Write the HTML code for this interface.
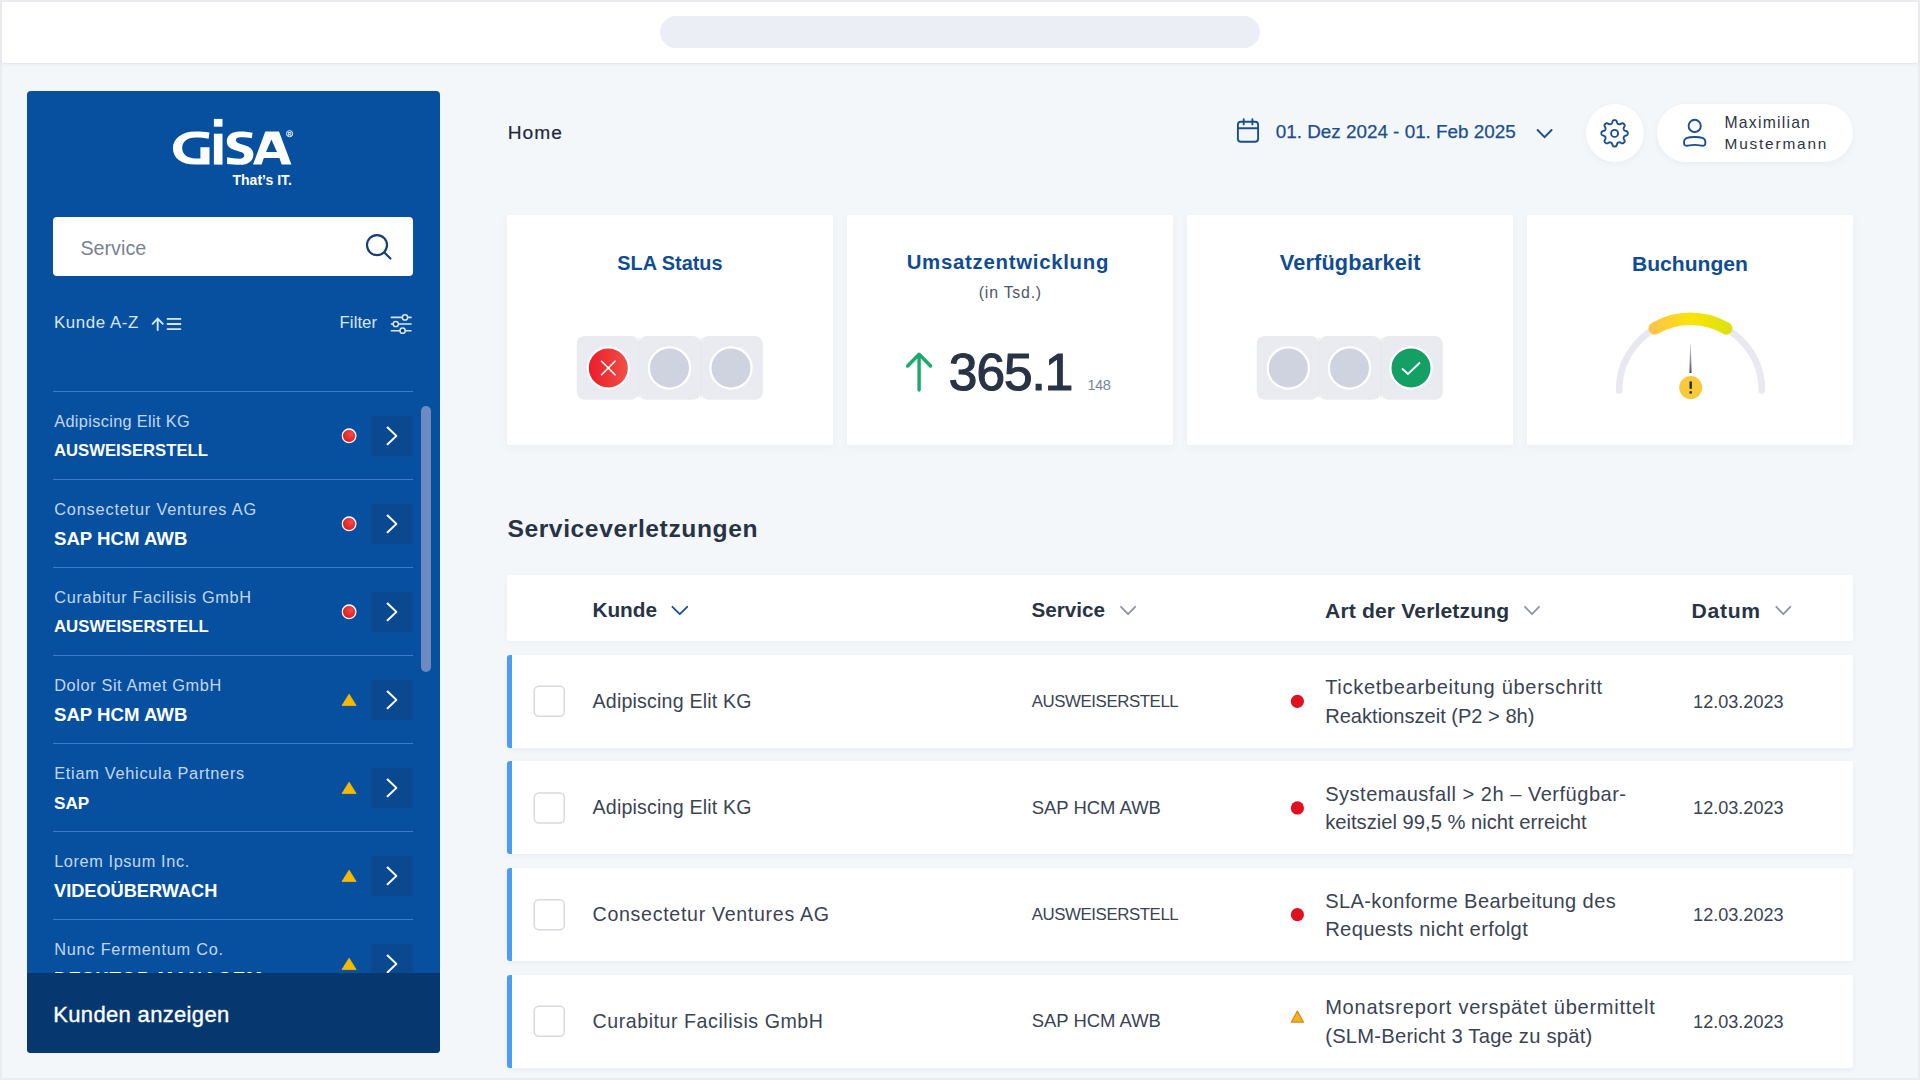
<!DOCTYPE html>
<html><head><meta charset="utf-8"><title>GISA Dashboard</title>
<style>
html,body{margin:0;padding:0;width:1920px;height:1080px;overflow:hidden;background:#F3F6FA;}
body{position:relative;font-family:"Liberation Sans",sans-serif;}
.t{position:absolute;white-space:nowrap;line-height:1;}
.r{position:absolute;box-sizing:border-box;}
.s{position:absolute;left:0;top:0;overflow:visible;pointer-events:none;}
</style></head><body>
<div class="r" style="left:0.00px;top:0.00px;width:1920.00px;height:1080.00px;background:#EBEBF2;border-radius:0px;"></div>
<div class="r" style="left:2.00px;top:2.00px;width:1916.00px;height:1076.00px;background:#F4F7FA;border-radius:0px;"></div>
<div class="r" style="left:2.00px;top:2.00px;width:1916.00px;height:62.00px;background:#FFFFFF;border-radius:0px;border-bottom:1px solid #E4E8EF;box-shadow:0 1px 3px rgba(40,60,100,0.05);"></div>
<div class="r" style="left:660.00px;top:16.00px;width:600.00px;height:32.00px;background:#EBEEF5;border-radius:16px;"></div>
<div class="r" style="left:26.67px;top:90.67px;width:413.33px;height:962.66px;background:#07509F;border-radius:4px;"></div>
<div class="r" style="left:53.00px;top:217.00px;width:360.30px;height:59.00px;background:#FFFFFF;border-radius:4px;"></div>
<div class="t" style="left:80.40px;top:238.89px;font-size:19.75px;letter-spacing:0.000px;color:#7A7F93;font-weight:400;">Service</div>
<div class="t" style="left:232.50px;top:173.12px;font-size:14.03px;letter-spacing:0.000px;color:#FFFFFF;font-weight:700;">That’s IT.</div>
<svg class="s" width="1920" height="1080" viewBox="0 0 1920 1080"><g fill="#FFFFFF"><path d="M209.5,132.6 C205,131.6 200,131.4 195.5,131.4 C181,131.4 172.9,139 172.9,148 C172.9,158 181,164.6 195.5,164.6 L209.5,164.6 L209.5,147.2 L200.4,147.2 L200.4,158.4 L195.5,158.4 C187,158.4 182.2,154 182.2,148 C182.2,141.8 187,137.6 195.5,137.6 C200,137.6 205,138.1 208.6,138.8 Z"/><rect x="213.9" y="118.9" width="8.6" height="7.8"/><rect x="213.9" y="133.7" width="8.6" height="30.9"/><path fill-rule="evenodd" d="M253,164.6 L265.3,131.5 L279,131.5 L291.4,164.6 L281.7,164.6 L279.4,158 L263.8,158 L261.6,164.6 Z M266,152 L277,152 L271.4,139.4 Z"/></g><path fill="#FFFFFF" d="M252.6,132.8 C248,131.8 244,131.4 239.9,131.4 C231.5,131.4 226.8,135.6 226.8,141.2 C226.8,147.4 232,149.4 238.5,151.2 C242.6,152.3 244.3,153.2 244.3,155.3 C244.3,157.6 242.3,158.7 239.4,158.7 C235.2,158.7 230.8,157.8 227.1,157.2 L227.1,164.1 C231,164.6 235.5,164.8 239.4,164.8 C248.6,164.8 253.4,160.6 253.4,154.4 C253.4,148.4 248.8,146.2 242.2,144.4 C237.6,143.1 235.9,142.2 235.9,140.2 C235.9,138.2 237.8,137.3 240.4,137.3 C244.4,137.3 248.4,137.7 251.7,138.3 Z"/><circle cx="289.6" cy="133.7" r="3.1" fill="none" stroke="#FFFFFF" stroke-width="0.9"/><text x="289.6" y="135.6" font-size="5" font-weight="700" text-anchor="middle" fill="#FFFFFF" font-family="Liberation Sans">R</text><circle cx="377" cy="245.1" r="10" fill="none" stroke="#163F73" stroke-width="2.2"/><line x1="384.4" y1="252.5" x2="390.4" y2="258.5" stroke="#163F73" stroke-width="2.2" stroke-linecap="round"/><g stroke="#D9E7FA" stroke-width="1.9" stroke-linecap="round" fill="none"><path d="M157.7,330 L157.7,319 M152.6,323.8 L157.7,318.6 L162.8,323.8"/><path d="M167.6,318.9 H180.4 M167.6,324 H180.4 M167.6,329.1 H180.4"/></g><g stroke="#D9E7FA" stroke-width="1.6" stroke-linecap="round" fill="none"><path d="M391.4,317.4 H411 M391.4,324 H411 M391.4,330.7 H411"/></g><g stroke="#D9E7FA" stroke-width="1.5" fill="#0B3E78"><circle cx="405" cy="317.4" r="2.6"/><circle cx="395.8" cy="324" r="2.6"/><circle cx="402.6" cy="330.7" r="2.6"/></g></svg>
<div class="t" style="left:54.00px;top:314.98px;font-size:16.92px;letter-spacing:0.558px;color:#D9E7FA;font-weight:400;">Kunde A-Z</div>
<div class="t" style="left:339.60px;top:315.01px;font-size:16.77px;letter-spacing:0.035px;color:#D9E7FA;font-weight:400;">Filter</div>
<div class="r" style="left:53.30px;top:390.75px;width:360.10px;height:1.00px;background:#3E7CCB;border-radius:0px;"></div>
<div class="r" style="left:371.30px;top:415.60px;width:41.50px;height:40.80px;background:#0A4890;border-radius:1px;"></div>
<div class="t" style="left:54.20px;top:413.09px;font-size:16.32px;letter-spacing:0.345px;color:#C3D7F4;font-weight:400;">Adipiscing Elit KG</div>
<div class="t" style="left:54.00px;top:443.47px;font-size:16.69px;letter-spacing:0.000px;color:#FFFFFF;font-weight:700;">AUSWEISERSTELL</div>
<div class="r" style="left:53.30px;top:478.75px;width:360.10px;height:1.00px;background:#3E7CCB;border-radius:0px;"></div>
<div class="r" style="left:371.30px;top:503.60px;width:41.50px;height:40.80px;background:#0A4890;border-radius:1px;"></div>
<div class="t" style="left:54.20px;top:501.09px;font-size:16.32px;letter-spacing:0.814px;color:#C3D7F4;font-weight:400;">Consectetur Ventures AG</div>
<div class="t" style="left:54.00px;top:529.83px;font-size:18.63px;letter-spacing:0.000px;color:#FFFFFF;font-weight:700;">SAP HCM AWB</div>
<div class="r" style="left:53.30px;top:566.75px;width:360.10px;height:1.00px;background:#3E7CCB;border-radius:0px;"></div>
<div class="r" style="left:371.30px;top:591.60px;width:41.50px;height:40.80px;background:#0A4890;border-radius:1px;"></div>
<div class="t" style="left:54.20px;top:589.09px;font-size:16.32px;letter-spacing:0.681px;color:#C3D7F4;font-weight:400;">Curabitur Facilisis GmbH</div>
<div class="t" style="left:54.00px;top:619.40px;font-size:16.78px;letter-spacing:0.000px;color:#FFFFFF;font-weight:700;">AUSWEISERSTELL</div>
<div class="r" style="left:53.30px;top:654.75px;width:360.10px;height:1.00px;background:#3E7CCB;border-radius:0px;"></div>
<div class="r" style="left:371.30px;top:679.60px;width:41.50px;height:40.80px;background:#0A4890;border-radius:1px;"></div>
<div class="t" style="left:54.20px;top:677.09px;font-size:16.32px;letter-spacing:0.614px;color:#C3D7F4;font-weight:400;">Dolor Sit Amet GmbH</div>
<div class="t" style="left:54.00px;top:705.83px;font-size:18.63px;letter-spacing:0.000px;color:#FFFFFF;font-weight:700;">SAP HCM AWB</div>
<div class="r" style="left:53.30px;top:742.75px;width:360.10px;height:1.00px;background:#3E7CCB;border-radius:0px;"></div>
<div class="r" style="left:371.30px;top:767.60px;width:41.50px;height:40.80px;background:#0A4890;border-radius:1px;"></div>
<div class="t" style="left:54.20px;top:765.09px;font-size:16.32px;letter-spacing:0.724px;color:#C3D7F4;font-weight:400;">Etiam Vehicula Partners</div>
<div class="t" style="left:54.00px;top:795.08px;font-size:17.15px;letter-spacing:-0.000px;color:#FFFFFF;font-weight:700;">SAP</div>
<div class="r" style="left:53.30px;top:830.75px;width:360.10px;height:1.00px;background:#3E7CCB;border-radius:0px;"></div>
<div class="r" style="left:371.30px;top:855.60px;width:41.50px;height:40.80px;background:#0A4890;border-radius:1px;"></div>
<div class="t" style="left:54.20px;top:853.09px;font-size:16.32px;letter-spacing:0.599px;color:#C3D7F4;font-weight:400;">Lorem Ipsum Inc.</div>
<div class="t" style="left:54.00px;top:882.20px;font-size:18.20px;letter-spacing:0.000px;color:#FFFFFF;font-weight:700;">VIDEOÜBERWACH</div>
<div class="r" style="left:53.30px;top:918.75px;width:360.10px;height:1.00px;background:#3E7CCB;border-radius:0px;"></div>
<div class="r" style="left:371.30px;top:943.60px;width:41.50px;height:40.80px;background:#0A4890;border-radius:1px;"></div>
<div class="t" style="left:54.20px;top:941.09px;font-size:16.32px;letter-spacing:0.767px;color:#C3D7F4;font-weight:400;">Nunc Fermentum Co.</div>
<div class="t" style="left:54.00px;top:969.76px;font-size:18.71px;letter-spacing:0.922px;color:#FFFFFF;font-weight:700;">DESKTOP-MANAGEM</div>
<svg class="s" width="1920" height="1080" viewBox="0 0 1920 1080"><defs><radialGradient id="rg" cx="0.65" cy="0.35" r="0.7"><stop offset="0" stop-color="#F24B4B"/><stop offset="1" stop-color="#DC1A1F"/></radialGradient></defs><path d="M387.6,427.45 L396.4,435.85 L387.6,444.25" fill="none" stroke="#FFFFFF" stroke-width="2" stroke-linecap="round" stroke-linejoin="round"/><circle cx="349.1" cy="435.80" r="6.8" fill="url(#rg)" stroke="#FFFFFF" stroke-width="1.3"/><path d="M387.6,515.45 L396.4,523.85 L387.6,532.25" fill="none" stroke="#FFFFFF" stroke-width="2" stroke-linecap="round" stroke-linejoin="round"/><circle cx="349.1" cy="523.80" r="6.8" fill="url(#rg)" stroke="#FFFFFF" stroke-width="1.3"/><path d="M387.6,603.45 L396.4,611.85 L387.6,620.25" fill="none" stroke="#FFFFFF" stroke-width="2" stroke-linecap="round" stroke-linejoin="round"/><circle cx="349.1" cy="611.80" r="6.8" fill="url(#rg)" stroke="#FFFFFF" stroke-width="1.3"/><path d="M387.6,691.45 L396.4,699.85 L387.6,708.25" fill="none" stroke="#FFFFFF" stroke-width="2" stroke-linecap="round" stroke-linejoin="round"/><path d="M349.1,694.15 L356.2,705.55 L342,705.55 Z" fill="#F6B900" stroke="#F6B900" stroke-width="0.8" stroke-linejoin="round"/><path d="M387.6,779.45 L396.4,787.85 L387.6,796.25" fill="none" stroke="#FFFFFF" stroke-width="2" stroke-linecap="round" stroke-linejoin="round"/><path d="M349.1,782.15 L356.2,793.55 L342,793.55 Z" fill="#F6B900" stroke="#F6B900" stroke-width="0.8" stroke-linejoin="round"/><path d="M387.6,867.45 L396.4,875.85 L387.6,884.25" fill="none" stroke="#FFFFFF" stroke-width="2" stroke-linecap="round" stroke-linejoin="round"/><path d="M349.1,870.15 L356.2,881.55 L342,881.55 Z" fill="#F6B900" stroke="#F6B900" stroke-width="0.8" stroke-linejoin="round"/><path d="M387.6,955.45 L396.4,963.85 L387.6,972.25" fill="none" stroke="#FFFFFF" stroke-width="2" stroke-linecap="round" stroke-linejoin="round"/><path d="M349.1,958.15 L356.2,969.55 L342,969.55 Z" fill="#F6B900" stroke="#F6B900" stroke-width="0.8" stroke-linejoin="round"/></svg>
<div class="r" style="left:420.90px;top:405.50px;width:9.80px;height:266.50px;background:#6D8BC0;border-radius:5px;"></div>
<div class="r" style="left:26.67px;top:973.33px;width:413.33px;height:80.00px;background:#06386F;border-radius:0 0 4px 4px;"></div>
<div class="t" style="left:53.30px;top:1004.37px;font-size:22.01px;letter-spacing:0.330px;color:#FFFFFF;font-weight:400;-webkit-text-stroke:0.35px #fff;">Kunden anzeigen</div>
<div class="t" style="left:507.80px;top:122.98px;font-size:19.16px;letter-spacing:0.978px;color:#1E293B;font-weight:400;-webkit-text-stroke:0.2px #1E293B;">Home</div>
<svg class="s" width="1920" height="1080" viewBox="0 0 1920 1080"><g fill="none" stroke="#1A4E8E" stroke-width="1.9" stroke-linecap="round"><rect x="1237.9" y="121.8" width="20.2" height="20" rx="3"/><path d="M1238,128.3 H1258 M1243.7,119.2 V124.4 M1252.4,119.2 V124.4"/><path d="M1537.6,130 L1544.6,137.2 L1551.6,130"/></g></svg>
<div class="t" style="left:1275.70px;top:123.21px;font-size:18.88px;letter-spacing:0.000px;color:#1A4E8E;font-weight:400;-webkit-text-stroke:0.25px #1A4E8E;">01. Dez 2024 - 01. Feb 2025</div>
<div class="r" style="left:1585.60px;top:104.00px;width:58.10px;height:58.20px;background:#FFFFFF;border-radius:29px;box-shadow:0 2px 6px rgba(30,50,90,0.06);"></div>
<div class="r" style="left:1657.30px;top:104.00px;width:195.70px;height:58.20px;background:#FFFFFF;border-radius:29px;box-shadow:0 2px 6px rgba(30,50,90,0.06);"></div>
<svg class="s" width="1920" height="1080" viewBox="0 0 1920 1080"><polygon points="1614.60,120.10 1614.95,120.11 1615.29,120.16 1615.63,120.25 1615.96,120.40 1616.26,120.66 1616.54,121.06 1616.77,121.61 1616.95,122.23 1617.12,122.79 1617.30,123.21 1617.51,123.49 1617.72,123.69 1617.95,123.83 1618.19,123.96 1618.43,124.06 1618.67,124.16 1618.92,124.24 1619.19,124.29 1619.48,124.31 1619.82,124.25 1620.25,124.09 1620.76,123.81 1621.33,123.50 1621.89,123.27 1622.36,123.18 1622.76,123.22 1623.10,123.34 1623.41,123.52 1623.68,123.73 1623.93,123.97 1624.17,124.22 1624.38,124.49 1624.56,124.80 1624.68,125.14 1624.72,125.54 1624.63,126.01 1624.40,126.57 1624.09,127.14 1623.81,127.65 1623.65,128.08 1623.59,128.42 1623.61,128.71 1623.66,128.98 1623.74,129.23 1623.84,129.47 1623.94,129.71 1624.07,129.95 1624.21,130.18 1624.41,130.39 1624.69,130.60 1625.11,130.78 1625.67,130.95 1626.29,131.13 1626.84,131.36 1627.24,131.64 1627.50,131.94 1627.65,132.27 1627.74,132.61 1627.79,132.95 1627.80,133.30 1627.79,133.65 1627.74,133.99 1627.65,134.33 1627.50,134.66 1627.24,134.96 1626.84,135.24 1626.29,135.47 1625.67,135.65 1625.11,135.82 1624.69,136.00 1624.41,136.21 1624.21,136.42 1624.07,136.65 1623.94,136.89 1623.84,137.13 1623.74,137.37 1623.66,137.62 1623.61,137.89 1623.59,138.18 1623.65,138.52 1623.81,138.95 1624.09,139.46 1624.40,140.03 1624.63,140.59 1624.72,141.06 1624.68,141.46 1624.56,141.80 1624.38,142.11 1624.17,142.38 1623.93,142.63 1623.68,142.87 1623.41,143.08 1623.10,143.26 1622.76,143.38 1622.36,143.42 1621.89,143.33 1621.33,143.10 1620.76,142.79 1620.25,142.51 1619.82,142.35 1619.48,142.29 1619.19,142.31 1618.92,142.36 1618.67,142.44 1618.43,142.54 1618.19,142.64 1617.95,142.77 1617.72,142.91 1617.51,143.11 1617.30,143.39 1617.12,143.81 1616.95,144.37 1616.77,144.99 1616.54,145.54 1616.26,145.94 1615.96,146.20 1615.63,146.35 1615.29,146.44 1614.95,146.49 1614.60,146.50 1614.25,146.49 1613.91,146.44 1613.57,146.35 1613.24,146.20 1612.94,145.94 1612.66,145.54 1612.43,144.99 1612.25,144.37 1612.08,143.81 1611.90,143.39 1611.69,143.11 1611.48,142.91 1611.25,142.77 1611.01,142.64 1610.77,142.54 1610.53,142.44 1610.28,142.36 1610.01,142.31 1609.72,142.29 1609.38,142.35 1608.95,142.51 1608.44,142.79 1607.87,143.10 1607.31,143.33 1606.84,143.42 1606.44,143.38 1606.10,143.26 1605.79,143.08 1605.52,142.87 1605.27,142.63 1605.03,142.38 1604.82,142.11 1604.64,141.80 1604.52,141.46 1604.48,141.06 1604.57,140.59 1604.80,140.03 1605.11,139.46 1605.39,138.95 1605.55,138.52 1605.61,138.18 1605.59,137.89 1605.54,137.62 1605.46,137.37 1605.36,137.13 1605.26,136.89 1605.13,136.65 1604.99,136.42 1604.79,136.21 1604.51,136.00 1604.09,135.82 1603.53,135.65 1602.91,135.47 1602.36,135.24 1601.96,134.96 1601.70,134.66 1601.55,134.33 1601.46,133.99 1601.41,133.65 1601.40,133.30 1601.41,132.95 1601.46,132.61 1601.55,132.27 1601.70,131.94 1601.96,131.64 1602.36,131.36 1602.91,131.13 1603.53,130.95 1604.09,130.78 1604.51,130.60 1604.79,130.39 1604.99,130.18 1605.13,129.95 1605.26,129.71 1605.36,129.47 1605.46,129.23 1605.54,128.98 1605.59,128.71 1605.61,128.42 1605.55,128.08 1605.39,127.65 1605.11,127.14 1604.80,126.57 1604.57,126.01 1604.48,125.54 1604.52,125.14 1604.64,124.80 1604.82,124.49 1605.03,124.22 1605.27,123.97 1605.52,123.73 1605.79,123.52 1606.10,123.34 1606.44,123.22 1606.84,123.18 1607.31,123.27 1607.87,123.50 1608.44,123.81 1608.95,124.09 1609.38,124.25 1609.72,124.31 1610.01,124.29 1610.28,124.24 1610.53,124.16 1610.77,124.06 1611.01,123.96 1611.25,123.83 1611.48,123.69 1611.69,123.49 1611.90,123.21 1612.08,122.79 1612.25,122.23 1612.43,121.61 1612.66,121.06 1612.94,120.66 1613.24,120.40 1613.57,120.25 1613.91,120.16 1614.25,120.11 1614.60,120.10" fill="none" stroke="#1A4E8E" stroke-width="1.9" stroke-linejoin="round"/><circle cx="1614.6" cy="133.4" r="3.5" fill="none" stroke="#1A4E8E" stroke-width="1.9"/><circle cx="1694.7" cy="125.9" r="6.1" fill="none" stroke="#1A4E8E" stroke-width="1.9"/><path d="M1684.1,141.2 C1684.1,138.6 1688,137 1694.7,137 C1701.4,137 1705.3,138.6 1705.3,141.2 L1705.3,143.6 C1705.3,145.6 1703.6,146 1701.4,145.6 C1698.6,145.1 1696.5,144.9 1694.7,144.9 C1692.9,144.9 1690.8,145.1 1688,145.6 C1685.8,146 1684.1,145.6 1684.1,143.6 Z" fill="none" stroke="#1A4E8E" stroke-width="1.9"/></svg>
<div class="t" style="left:1724.50px;top:114.59px;font-size:15.72px;letter-spacing:1.236px;color:#2D3443;font-weight:400;">Maximilian</div>
<div class="t" style="left:1724.50px;top:136.05px;font-size:15.42px;letter-spacing:1.807px;color:#2D3443;font-weight:400;">Mustermann</div>
<div class="r" style="left:506.67px;top:215.00px;width:326.67px;height:230.00px;background:#FFFFFF;border-radius:2px;box-shadow:0 3px 8px rgba(40,60,100,0.05);"></div>
<div class="r" style="left:846.67px;top:215.00px;width:326.67px;height:230.00px;background:#FFFFFF;border-radius:2px;box-shadow:0 3px 8px rgba(40,60,100,0.05);"></div>
<div class="r" style="left:1186.67px;top:215.00px;width:326.67px;height:230.00px;background:#FFFFFF;border-radius:2px;box-shadow:0 3px 8px rgba(40,60,100,0.05);"></div>
<div class="r" style="left:1526.67px;top:215.00px;width:326.67px;height:230.00px;background:#FFFFFF;border-radius:2px;box-shadow:0 3px 8px rgba(40,60,100,0.05);"></div>
<div class="t" style="left:617.30px;top:253.68px;font-size:19.87px;letter-spacing:-0.000px;color:#0F4C94;font-weight:700;">SLA Status</div>
<div class="t" style="left:906.70px;top:251.96px;font-size:20.36px;letter-spacing:0.727px;color:#0F4C94;font-weight:700;">Umsatzentwicklung</div>
<div class="t" style="left:1279.80px;top:252.32px;font-size:21.71px;letter-spacing:0.157px;color:#0F4C94;font-weight:700;">Verfügbarkeit</div>
<div class="t" style="left:1632.00px;top:252.86px;font-size:21.07px;letter-spacing:0.000px;color:#0F4C94;font-weight:700;">Buchungen</div>
<div class="t" style="left:978.80px;top:284.77px;font-size:15.87px;letter-spacing:0.778px;color:#4F5767;font-weight:400;">(in Tsd.)</div>
<div class="t" style="left:948.80px;top:346.98px;font-size:51.41px;letter-spacing:-0.995px;color:#283346;font-weight:400;-webkit-text-stroke:1.2px #283346;">365.1</div>
<div class="t" style="left:1087.40px;top:378.21px;font-size:14.52px;letter-spacing:-0.424px;color:#7B8396;font-weight:400;">148</div>
<svg class="s" width="1920" height="1080" viewBox="0 0 1920 1080"><defs><linearGradient id="red" x1="0" y1="0" x2="1" y2="0"><stop offset="0" stop-color="#EC1A27"/><stop offset="1" stop-color="#EF5249"/></linearGradient><linearGradient id="yel" x1="0" y1="0" x2="1" y2="0"><stop offset="0" stop-color="#FDC545"/><stop offset="0.5" stop-color="#FCE30A"/><stop offset="1" stop-color="#DDE20E"/></linearGradient><linearGradient id="ndl" x1="0" y1="0" x2="0" y2="1"><stop offset="0" stop-color="#D5D8E6"/><stop offset="1" stop-color="#4A4F73"/></linearGradient></defs><rect x="576.80" y="336" width="62" height="63.8" rx="8" fill="#E9EBF1"/><rect x="638.80" y="336" width="62" height="63.8" rx="8" fill="#E9EBF1"/><rect x="700.80" y="336" width="62" height="63.8" rx="8" fill="#E9EBF1"/><rect x="638.20" y="338" width="1.2" height="59.8" fill="#E3E6EC"/><rect x="700.20" y="338" width="1.2" height="59.8" fill="#E3E6EC"/><circle cx="608.30" cy="368" r="20.6" fill="url(#red)" stroke="#FFFFFF" stroke-width="2.2"/><path d="M601.10,360.8 L615.50,375.2 M615.50,360.8 L601.10,375.2" stroke="#FFFFFF" stroke-width="1.6"/><circle cx="669.50" cy="368" r="20.6" fill="#CFD2DF" stroke="#FFFFFF" stroke-width="2.2"/><circle cx="731.00" cy="368" r="20.6" fill="#CFD2DF" stroke="#FFFFFF" stroke-width="2.2"/><rect x="1256.80" y="336" width="62" height="63.8" rx="8" fill="#E9EBF1"/><rect x="1318.80" y="336" width="62" height="63.8" rx="8" fill="#E9EBF1"/><rect x="1380.80" y="336" width="62" height="63.8" rx="8" fill="#E9EBF1"/><rect x="1318.20" y="338" width="1.2" height="59.8" fill="#E3E6EC"/><rect x="1380.20" y="338" width="1.2" height="59.8" fill="#E3E6EC"/><circle cx="1288.30" cy="368" r="20.6" fill="#CFD2DF" stroke="#FFFFFF" stroke-width="2.2"/><circle cx="1349.50" cy="368" r="20.6" fill="#CFD2DF" stroke="#FFFFFF" stroke-width="2.2"/><circle cx="1411.00" cy="368" r="20.6" fill="#14A064" stroke="#FFFFFF" stroke-width="2.2"/><path d="M1402.00,368.5 L1408.00,374 L1420.00,362.5" fill="none" stroke="#FFFFFF" stroke-width="1.8"/><path d="M919.1,390 V354.5 M907.6,366 L919.1,354.2 L930.6,366" fill="none" stroke="#1BAA6C" stroke-width="3.4" stroke-linecap="round" stroke-linejoin="round"/><path d="M1619.10,390.57 A71.4,71.4 0 0 1 1761.90,390.57" fill="none" stroke="#E7E8F0" stroke-width="6.6" stroke-linecap="round"/><path d="M1654.80,328.37 A71.4,71.4 0 0 1 1726.20,328.37" fill="none" stroke="url(#yel)" stroke-width="12.6" stroke-linecap="round"/><path d="M1690.1,344.5 L1690.9,344.5 L1691.6,373 L1689.4,373 Z" fill="url(#ndl)"/><circle cx="1690.7" cy="387.6" r="11.5" fill="#F8C93A"/><rect x="1689.5" y="381.3" width="2.4" height="7.6" rx="1" fill="#2A2A3A"/><circle cx="1690.7" cy="392.4" r="1.3" fill="#2A2A3A"/></svg>
<div class="t" style="left:507.40px;top:517.40px;font-size:24.63px;letter-spacing:0.589px;color:#283346;font-weight:700;">Serviceverletzungen</div>
<div class="r" style="left:506.67px;top:574.70px;width:1346.66px;height:66.50px;background:#FFFFFF;border-radius:3px;box-shadow:0 2px 6px rgba(40,60,100,0.04);"></div>
<div class="t" style="left:592.40px;top:599.79px;font-size:20.80px;letter-spacing:-0.000px;color:#283346;font-weight:700;">Kunde</div>
<div class="t" style="left:1031.50px;top:599.88px;font-size:20.70px;letter-spacing:0.000px;color:#283346;font-weight:700;">Service</div>
<div class="t" style="left:1325.10px;top:599.53px;font-size:21.11px;letter-spacing:0.132px;color:#283346;font-weight:700;">Art der Verletzung</div>
<div class="t" style="left:1691.50px;top:599.53px;font-size:21.11px;letter-spacing:0.713px;color:#283346;font-weight:700;">Datum</div>
<div class="r" style="left:506.67px;top:654.50px;width:1346.66px;height:93.30px;background:#FFFFFF;border-radius:4px 3px 3px 4px;box-shadow:0 2px 5px rgba(40,60,100,0.05);"></div>
<div class="r" style="left:506.67px;top:654.50px;width:5.33px;height:93.30px;background:#4A9CF4;border-radius:3px 0 0 3px;"></div>
<div class="t" style="left:592.60px;top:691.80px;font-size:19.61px;letter-spacing:0.181px;color:#3A4354;font-weight:400;">Adipiscing Elit KG</div>
<div class="t" style="left:1031.70px;top:693.72px;font-size:16.87px;letter-spacing:-0.437px;color:#3A4354;font-weight:400;">AUSWEISERSTELL</div>
<div class="t" style="left:1693.10px;top:692.59px;font-size:18.08px;letter-spacing:0.000px;color:#3A4354;font-weight:400;">12.03.2023</div>
<div class="t" style="left:1325.20px;top:677.42px;font-size:20.06px;letter-spacing:0.683px;color:#3A4354;font-weight:400;">Ticketbearbeitung überschritt</div>
<div class="t" style="left:1325.20px;top:705.80px;font-size:20.09px;letter-spacing:-0.000px;color:#3A4354;font-weight:400;">Reaktionszeit (P2 > 8h)</div>
<div class="r" style="left:506.67px;top:761.17px;width:1346.66px;height:93.30px;background:#FFFFFF;border-radius:4px 3px 3px 4px;box-shadow:0 2px 5px rgba(40,60,100,0.05);"></div>
<div class="r" style="left:506.67px;top:761.17px;width:5.33px;height:93.30px;background:#4A9CF4;border-radius:3px 0 0 3px;"></div>
<div class="t" style="left:592.60px;top:798.47px;font-size:19.61px;letter-spacing:0.181px;color:#3A4354;font-weight:400;">Adipiscing Elit KG</div>
<div class="t" style="left:1031.70px;top:799.03px;font-size:18.47px;letter-spacing:0.000px;color:#3A4354;font-weight:400;">SAP HCM AWB</div>
<div class="t" style="left:1693.10px;top:799.26px;font-size:18.08px;letter-spacing:0.000px;color:#3A4354;font-weight:400;">12.03.2023</div>
<div class="t" style="left:1325.20px;top:784.09px;font-size:20.06px;letter-spacing:0.501px;color:#3A4354;font-weight:400;">Systemausfall > 2h – Verfügbar-</div>
<div class="t" style="left:1325.20px;top:812.38px;font-size:20.19px;letter-spacing:-0.000px;color:#3A4354;font-weight:400;">keitsziel 99,5 % nicht erreicht</div>
<div class="r" style="left:506.67px;top:867.84px;width:1346.66px;height:93.30px;background:#FFFFFF;border-radius:4px 3px 3px 4px;box-shadow:0 2px 5px rgba(40,60,100,0.05);"></div>
<div class="r" style="left:506.67px;top:867.84px;width:5.33px;height:93.30px;background:#4A9CF4;border-radius:3px 0 0 3px;"></div>
<div class="t" style="left:592.60px;top:905.14px;font-size:19.61px;letter-spacing:0.685px;color:#3A4354;font-weight:400;">Consectetur Ventures AG</div>
<div class="t" style="left:1031.70px;top:907.06px;font-size:16.87px;letter-spacing:-0.437px;color:#3A4354;font-weight:400;">AUSWEISERSTELL</div>
<div class="t" style="left:1693.10px;top:905.93px;font-size:18.08px;letter-spacing:0.000px;color:#3A4354;font-weight:400;">12.03.2023</div>
<div class="t" style="left:1325.20px;top:890.76px;font-size:20.06px;letter-spacing:0.402px;color:#3A4354;font-weight:400;">SLA-konforme Bearbeitung des</div>
<div class="t" style="left:1325.20px;top:919.03px;font-size:20.21px;letter-spacing:0.351px;color:#3A4354;font-weight:400;">Requests nicht erfolgt</div>
<div class="r" style="left:506.67px;top:974.51px;width:1346.66px;height:93.30px;background:#FFFFFF;border-radius:4px 3px 3px 4px;box-shadow:0 2px 5px rgba(40,60,100,0.05);"></div>
<div class="r" style="left:506.67px;top:974.51px;width:5.33px;height:93.30px;background:#4A9CF4;border-radius:3px 0 0 3px;"></div>
<div class="t" style="left:592.60px;top:1011.81px;font-size:19.61px;letter-spacing:0.540px;color:#3A4354;font-weight:400;">Curabitur Facilisis GmbH</div>
<div class="t" style="left:1031.70px;top:1012.37px;font-size:18.47px;letter-spacing:0.000px;color:#3A4354;font-weight:400;">SAP HCM AWB</div>
<div class="t" style="left:1693.10px;top:1012.60px;font-size:18.08px;letter-spacing:0.000px;color:#3A4354;font-weight:400;">12.03.2023</div>
<div class="t" style="left:1325.20px;top:997.43px;font-size:20.06px;letter-spacing:0.735px;color:#3A4354;font-weight:400;">Monatsreport verspätet übermittelt</div>
<div class="t" style="left:1325.20px;top:1025.70px;font-size:20.21px;letter-spacing:0.221px;color:#3A4354;font-weight:400;">(SLM-Bericht 3 Tage zu spät)</div>
<svg class="s" width="1920" height="1080" viewBox="0 0 1920 1080"><path d="M672.40,606.8 L679.80,614.2 L687.20,606.8" fill="none" stroke="#1A4E8E" stroke-width="1.8" stroke-linecap="round" stroke-linejoin="round"/><path d="M1121.00,606.8 L1128.10,614.2 L1135.20,606.8" fill="none" stroke="#8E94A8" stroke-width="1.8" stroke-linecap="round" stroke-linejoin="round"/><path d="M1525.00,606.8 L1532.00,614.2 L1539.00,606.8" fill="none" stroke="#8E94A8" stroke-width="1.8" stroke-linecap="round" stroke-linejoin="round"/><path d="M1776.30,606.8 L1783.30,614.2 L1790.30,606.8" fill="none" stroke="#8E94A8" stroke-width="1.8" stroke-linecap="round" stroke-linejoin="round"/><rect x="534.3" y="686.30" width="30" height="30" rx="4.5" fill="#FFFFFF" stroke="#D6D9DF" stroke-width="1.5"/><circle cx="1297.4" cy="701.30" r="6.6" fill="#E0101F"/><rect x="534.3" y="792.97" width="30" height="30" rx="4.5" fill="#FFFFFF" stroke="#D6D9DF" stroke-width="1.5"/><circle cx="1297.4" cy="807.97" r="6.6" fill="#E0101F"/><rect x="534.3" y="899.64" width="30" height="30" rx="4.5" fill="#FFFFFF" stroke="#D6D9DF" stroke-width="1.5"/><circle cx="1297.4" cy="914.64" r="6.6" fill="#E0101F"/><rect x="534.3" y="1006.31" width="30" height="30" rx="4.5" fill="#FFFFFF" stroke="#D6D9DF" stroke-width="1.5"/><path d="M1297.4,1011.11 L1303.4,1022.11 L1291.4,1022.11 Z" fill="#F6B02A" stroke="#D98A00" stroke-width="1.2" stroke-linejoin="round"/></svg>
</body></html>
